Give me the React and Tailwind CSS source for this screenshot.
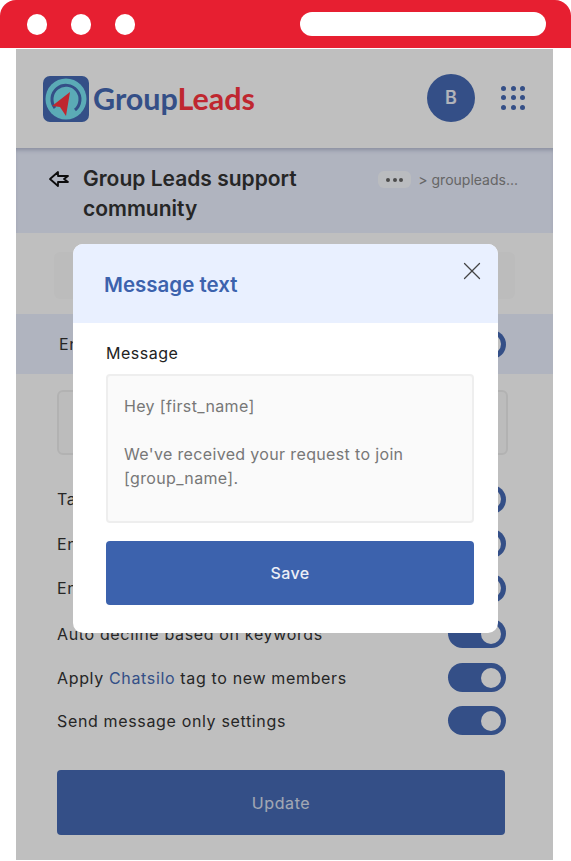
import React from 'react';
import { X } from 'lucide-react';

const font = "font-['Inter','Liberation_Sans',sans-serif]";

const Logo = () => (
  <div className="flex items-center gap-[4px]">
    <svg width="46" height="46" viewBox="0 0 46 46">
      <rect width="46" height="46" rx="7" fill="#466ab4" />
      <circle cx="23" cy="23" r="20.5" fill="#7ae4f3" />
      <path d="M12 32A14 14 0 1 1 32 34" fill="none" stroke="#466ab4" strokeWidth="3" />
      <path d="M27 16L9 30L17 31L23 40Z" fill="#ff3540" />
    </svg>
    <div className="text-[30.5px] leading-none font-bold font-['Lato',sans-serif]">
      <span className="text-[#466ab4]">Group</span>
      <span className="text-[#ff3540]">Leads</span>
    </div>
  </div>
);

const GridDots = () => (
  <div className="grid grid-cols-3 gap-[4.5px]">
    {[...Array(9)].map((_, i) => (
      <div key={i} className="w-[5px] h-[5px] rounded-full bg-[#466ab4]" />
    ))}
  </div>
);

const BackArrow = () => (
  <svg width="22" height="20" viewBox="0 0 22 20" fill="none" stroke="#111" strokeWidth="1.8" strokeLinejoin="round">
    <path d="M2 10L10 3V7H20L16 10L20 13H10V17Z" />
  </svg>
);

const Toggle = () => (
  <div className="w-[58px] h-[29px] rounded-full bg-[#466ab4] flex items-center justify-end pr-[5px] shrink-0">
    <div className="w-[20px] h-[20px] rounded-full bg-white" />
  </div>
);

const Row = ({ className = '', children }) => (
  <div className={`flex items-center justify-between text-[#333] text-[16px] tracking-[0.65px] ${className}`}>
    <div>{children}</div>
    <Toggle />
  </div>
);

const App = () => {
  return (
    <div className={`w-[571px] h-[861px] bg-white overflow-hidden flex flex-col ${font}`}>
      <div className="h-[48px] shrink-0 bg-[#e71f31] rounded-t-[16px] flex items-center pl-[27px] pr-[25px]">
        <div className="flex gap-[24px]">
          <div className="w-[20px] h-[21px] rounded-full bg-white" />
          <div className="w-[20px] h-[21px] rounded-full bg-white" />
          <div className="w-[20px] h-[21px] rounded-full bg-white" />
        </div>
        <div className="ml-auto w-[246px] h-[24px] rounded-full bg-white" />
      </div>

      <div className="relative mt-px ml-[16px] w-[537px] h-[811px] bg-white overflow-hidden">
        <div className="h-[99px] flex items-center justify-between pl-[27px] pr-[28px]">
          <Logo />
          <div className="flex items-center gap-[26px] -mt-[2px]">
            <div className="w-[48px] h-[48px] rounded-full bg-[#466ab4] text-white/90 font-semibold text-[18px] flex items-center justify-center">B</div>
            <GridDots />
          </div>
        </div>

        <div className="h-[85px] bg-[#ebf0ff] shadow-[inset_0_4px_4px_-2px_rgba(60,70,110,0.3)] flex pl-[32px] pr-[35px] pt-[16px]">
          <div className="pt-[5px] shrink-0 w-[35px]"><BackArrow /></div>
          <div className="text-[21px] leading-[30px] font-semibold text-[#333] w-[250px]">Group Leads support community</div>
          <div className="ml-auto flex items-start gap-[7px] pt-[7px]">
            <div className="w-[33px] h-[17px] rounded-[6px] bg-white/70 flex items-center justify-center gap-[2.5px]">
              <div className="w-[4px] h-[4px] rounded-full bg-[#666]" />
              <div className="w-[4px] h-[4px] rounded-full bg-[#666]" />
              <div className="w-[4px] h-[4px] rounded-full bg-[#666]" />
            </div>
            <div className="text-[14px] leading-[17px] text-[#888] whitespace-nowrap">&gt; groupleads...</div>
          </div>
        </div>

        <div className="mx-[38px] mt-[19px] h-[47px] rounded-[6px] bg-[#fbfbfb]" />

        <div className="mt-[15px] h-[60px] bg-[#ebf0ff] pl-[43px] pr-[47px] flex items-center justify-between text-[16px] tracking-[0.65px] text-[#333]">
          <div>Enable auto approve</div>
          <Toggle />
        </div>

        <div className="ml-[41px] mr-[45px] mt-[16px] h-[65px] rounded-[6px] border-2 border-[#eee] bg-[#fbfbfb]" />

        <div className="ml-[41px] mr-[47px] mt-[21px] flex flex-col">
          <Row className="h-[46px]">Tag new members</Row>
          <Row className="h-[43px]">Enable welcome message</Row>
          <Row className="h-[46px]">Enable member questions</Row>
          <Row className="h-[45px]">Auto decline based on keywords</Row>
          <Row className="h-[43px]">Apply <span className="text-[#466ab4]">Chatsilo</span> tag to new members</Row>
          <Row className="h-[43px]">Send message only settings</Row>
        </div>

        <button className="block ml-[41px] mt-[28px] w-[448px] h-[65px] rounded-[4px] bg-[#466ab4] text-white/80 text-[16px] tracking-[0.6px]">Update</button>

        <div className="absolute inset-0 bg-black/25" />

        <div className="absolute left-[57px] top-[195px] w-[425px] h-[389px] bg-white rounded-[10px] overflow-hidden">
          <div className="relative h-[79px] bg-[#e9f0ff] pl-[31px] pt-[27px]">
            <div className="text-[20.5px] leading-[28px] font-semibold text-[#3c62ad]">Message text</div>
            <X className="absolute right-[11px] top-[12px] text-[#444]" size={30} strokeWidth={1} />
          </div>
          <div className="pl-[33px] pr-[24px] pt-[19px]">
            <div className="text-[16px] leading-[22px] text-[#222] tracking-[0.5px]">Message</div>
            <div className="mt-[10px] h-[149px] rounded-[4px] border-2 border-[#eee] bg-[#fafafa] pl-[16px] pt-[18px] text-[16px] leading-[24px] tracking-[0.35px] text-[#777]">
              <div>Hey [first_name]</div>
              <div className="mt-[24px]">We've received your request to join</div>
              <div>[group_name].</div>
            </div>
            <button className="block mt-[18px] w-full h-[64px] rounded-[4px] bg-[#3c62ad] text-white/90 text-[16px] tracking-[0.4px] font-medium">Save</button>
          </div>
        </div>
      </div>
    </div>
  );
};

export default App;
